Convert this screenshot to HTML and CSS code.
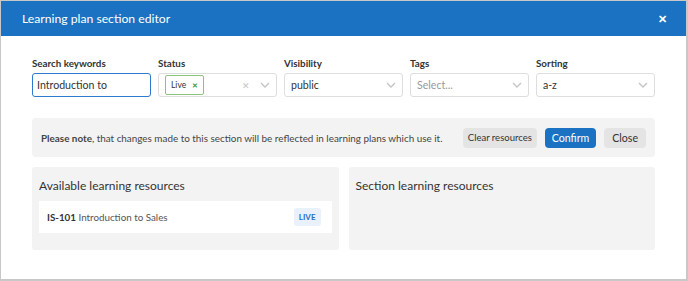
FILE: index.html
```html
<!DOCTYPE html>
<html lang="en">
<head>
    <meta charset="UTF-8">
    <title>Learning plan section editor</title>
    <link rel="stylesheet" href="styles.css">
</head>
<body>
    <div class="modal">
        <div class="modal-header">
            <span class="modal-title">Learning plan section editor</span>
            <span class="modal-close">&#x2715;</span>
        </div>
        <div class="modal-body">
            <div class="filters">
                <div class="field">
                    <label>Search keywords</label>
                    <div class="input focused">Introduction to</div>
                </div>
                <div class="field">
                    <label>Status</label>
                    <div class="input select">
                        <span class="chip">Live <span class="chip-x">&#x2715;</span></span>
                        <span class="select-icons">
                            <span class="clear">&#x2715;</span>
                            <svg class="chevron" width="10" height="6" viewBox="0 0 10 6"><path d="M1 1l4 4 4-4" fill="none" stroke="#c4c4c4" stroke-width="1.3"/></svg>
                        </span>
                    </div>
                </div>
                <div class="field">
                    <label>Visibility</label>
                    <div class="input select">
                        <span>public</span>
                        <svg class="chevron" width="10" height="6" viewBox="0 0 10 6"><path d="M1 1l4 4 4-4" fill="none" stroke="#c4c4c4" stroke-width="1.3"/></svg>
                    </div>
                </div>
                <div class="field">
                    <label>Tags</label>
                    <div class="input select">
                        <span class="placeholder">Select...</span>
                        <svg class="chevron" width="10" height="6" viewBox="0 0 10 6"><path d="M1 1l4 4 4-4" fill="none" stroke="#c4c4c4" stroke-width="1.3"/></svg>
                    </div>
                </div>
                <div class="field">
                    <label>Sorting</label>
                    <div class="input select">
                        <span>a-z</span>
                        <svg class="chevron" width="10" height="6" viewBox="0 0 10 6"><path d="M1 1l4 4 4-4" fill="none" stroke="#c4c4c4" stroke-width="1.3"/></svg>
                    </div>
                </div>
            </div>

            <div class="notice">
                <p><b>Please note</b>, that changes made to this section will be reflected in learning plans which use it.</p>
                <div class="actions">
                    <button class="btn">Clear resources</button>
                    <button class="btn primary">Confirm</button>
                    <button class="btn close">Close</button>
                </div>
            </div>

            <div class="panels">
                <div class="panel">
                    <h3>Available learning resources</h3>
                    <div class="resource">
                        <span><b>IS-101</b> Introduction to Sales</span>
                        <span class="badge">LIVE</span>
                    </div>
                </div>
                <div class="panel">
                    <h3>Section learning resources</h3>
                </div>
            </div>
        </div>
    </div>
</body>
</html>
```

FILE: styles.css
```css
body {
    margin: 0;
    padding: 1px 2px 0 1px;
    background-color: #c8c8c8;
    font-family: Lato, "Open Sans", sans-serif;
    color: #333333;
    height: 281px;
    box-sizing: border-box;
    overflow: hidden;
}

.modal {
    background-color: #ffffff;
    height: 278px;
}

.modal-header {
    background-color: #1b72c2;
    height: 35px;
    display: flex;
    align-items: center;
    justify-content: space-between;
    padding: 0 21px;
    color: #ffffff;
}

.modal-title {
    font-size: 12.2px;
}

.modal-close {
    font-size: 11px;
    font-weight: bold;
    margin-right: -2px;
}

.modal-body {
    padding: 21px 31px 0;
}

.filters {
    display: grid;
    grid-template-columns: repeat(5, 1fr);
    gap: 7px;
}

.field label {
    display: block;
    font-size: 9.8px;
    font-weight: bold;
    color: #333333;
    margin-bottom: 4px;
}

.input {
    height: 24px;
    box-sizing: border-box;
    border: 1px solid #dedede;
    border-radius: 3px;
    padding: 0 6px;
    font-size: 10.6px;
    display: flex;
    align-items: center;
    color: #333333;
}

.input.focused {
    border: 1.5px solid #2d7ad0;
    padding-left: 4px;
}

.select {
    justify-content: space-between;
}

.placeholder {
    color: #999999;
}

.chip {
    border: 1px solid #8cc47d;
    border-radius: 2px;
    font-size: 8.5px;
    padding: 4px 5px;
    display: flex;
    align-items: center;
    gap: 6px;
}

.chip-x {
    color: #4c9a3a;
    font-size: 7px;
    font-weight: bold;
}

.select-icons {
    display: flex;
    align-items: center;
    gap: 10px;
}

.clear {
    color: #c4c4c4;
    font-size: 9px;
}

.notice {
    margin-top: 21px;
    background-color: #f3f3f3;
    border-radius: 4px;
    height: 39px;
    display: flex;
    align-items: center;
    justify-content: space-between;
    padding: 0 9px;
}

.notice p {
    margin: 0;
    font-size: 9.9px;
    color: #444444;
}

.actions {
    display: flex;
    gap: 8px;
}

.btn {
    font-family: Lato, "Open Sans", sans-serif;
    font-size: 9.5px;
    border: none;
    border-radius: 4px;
    background-color: #e4e4e4;
    color: #333333;
    height: 20px;
    padding: 0 5px;
}

.btn.primary {
    background-color: #1b72c2;
    color: #ffffff;
    font-size: 10.6px;
    padding: 0 7px;
}

.btn.close {
    font-size: 10.6px;
    padding: 0 8px;
}

.panels {
    margin-top: 10px;
    display: grid;
    grid-template-columns: 1fr 1fr;
    gap: 10px;
}

.panel {
    background-color: #f3f3f3;
    border-radius: 3px;
    height: 83px;
    padding: 11px 7px 0;
    box-sizing: border-box;
}

.panel h3 {
    margin: 0 0 8px;
    font-size: 12px;
    font-weight: normal;
    color: #333333;
}

.resource {
    background-color: #ffffff;
    height: 32px;
    display: flex;
    align-items: center;
    justify-content: space-between;
    padding: 0 8px;
    font-size: 9.8px;
    color: #555555;
}

.resource b {
    color: #333333;
}

.badge {
    background-color: #e8f1fc;
    color: #2a6ec4;
    font-size: 8px;
    font-weight: bold;
    padding: 4px 5px;
    border-radius: 3px;
    margin-right: 3px;
}
```
